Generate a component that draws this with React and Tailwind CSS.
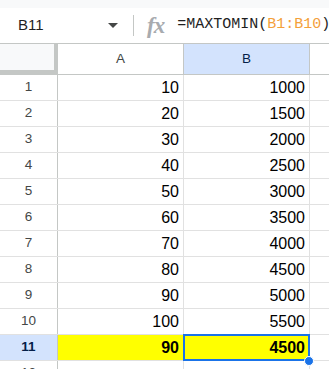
import React from 'react';

const rows = [
  [10, 1000], [20, 1500], [30, 2000], [40, 2500], [50, 3000],
  [60, 3500], [70, 4000], [80, 4500], [90, 5000], [100, 5500],
];

const sans = { fontFamily: '"Liberation Sans", Arial, sans-serif' };

function DataRow({ n, a, b }) {
  return (
    <div className="flex h-[26px] shrink-0 border-b border-[#e1e1e1]">
      <div className="w-[58px] shrink-0 border-r border-[#c4c7c5] flex items-center justify-center text-[13.5px] text-[#444746]">
        {n}
      </div>
      <div className="w-[126px] shrink-0 border-r border-[#e1e1e1] flex items-end justify-end pr-[4px] pb-[4px] text-[16px] text-black leading-none">
        {a}
      </div>
      <div className="w-[126px] shrink-0 border-r border-[#e1e1e1] flex items-end justify-end pr-[4px] pb-[4px] text-[16px] text-black leading-none">
        {b}
      </div>
      <div className="flex-1" />
    </div>
  );
}

export default function App() {
  return (
    <div className="w-[329px] h-[369px] overflow-hidden bg-white flex flex-col" style={sans}>
      <div className="h-[8px] shrink-0 bg-[#f8f9fa]" />

      {/* formula bar */}
      <div className="h-[36px] shrink-0 flex items-center border-b border-[#c4c7c5]">
        <div className="w-[133px] shrink-0 flex items-center pl-[18px] pr-[15px]">
          <span className="text-[15px] text-[#1f1f1f]">B11</span>
          <svg className="ml-auto" width="10" height="5" viewBox="0 0 10 5">
            <path d="M0 0 L10 0 L5 5 Z" fill="#444746" />
          </svg>
        </div>
        <div className="w-px h-[21px] bg-[#c4c7c5] shrink-0" />
        <span
          className="ml-[13px] text-[23px] italic font-bold text-[#a8abaf] leading-none tracking-[-1px]"
          style={{ fontFamily: '"Liberation Serif", "Times New Roman", serif' }}
        >
          fx
        </span>
        <span
          className="ml-[13px] text-[15px] text-[#1f1f1f] whitespace-nowrap"
          style={{ fontFamily: '"Liberation Mono", "Courier New", monospace' }}
        >
          =MAXTOMIN(<span className="text-[#f4a03a]">B1:B10</span>)
        </span>
      </div>

      {/* column headers */}
      <div className="flex h-[31px] shrink-0 border-b border-[#c4c7c5]">
        <div className="w-[58px] shrink-0 bg-[#f8f9fa] border-r-4 border-b-4 border-[#c4c7c5]" />
        <div className="w-[126px] shrink-0 border-r border-[#c4c7c5] flex items-center justify-center text-[13.5px] text-[#444746]">
          A
        </div>
        <div className="w-[126px] shrink-0 border-r border-[#c4c7c5] bg-[#d3e3fd] flex items-center justify-center text-[13.5px] text-[#041e49]">
          B
        </div>
        <div className="flex-1" />
      </div>

      {rows.map(([a, b], i) => (
        <DataRow key={i} n={i + 1} a={a} b={b} />
      ))}

      {/* selected row */}
      <div className="flex h-[26px] shrink-0 border-b border-[#e1e1e1]">
        <div className="w-[58px] shrink-0 border-r border-[#c4c7c5] bg-[#d3e3fd] flex items-center justify-center text-[13.5px] font-bold text-[#041e49]">
          11
        </div>
        <div className="w-[126px] shrink-0 border-r border-[#e1e1e1] bg-[#ffff00] flex items-end justify-end pr-[4px] pb-[4px] text-[16px] font-bold text-black leading-none">
          90
        </div>
        <div className="relative w-[126px] shrink-0 border-r border-[#e1e1e1] bg-[#ffff00] flex items-end justify-end pr-[4px] pb-[4px] text-[16px] font-bold text-black leading-none">
          4500
          <div className="absolute -left-px -top-px -right-px -bottom-px border-2 border-[#1a73e8]" />
          <div className="absolute -right-[5px] -bottom-[6px] w-[10px] h-[10px] rounded-full bg-[#1a73e8] border border-white" />
        </div>
        <div className="flex-1" />
      </div>

      <DataRow n={12} a="" b="" />
    </div>
  );
}
